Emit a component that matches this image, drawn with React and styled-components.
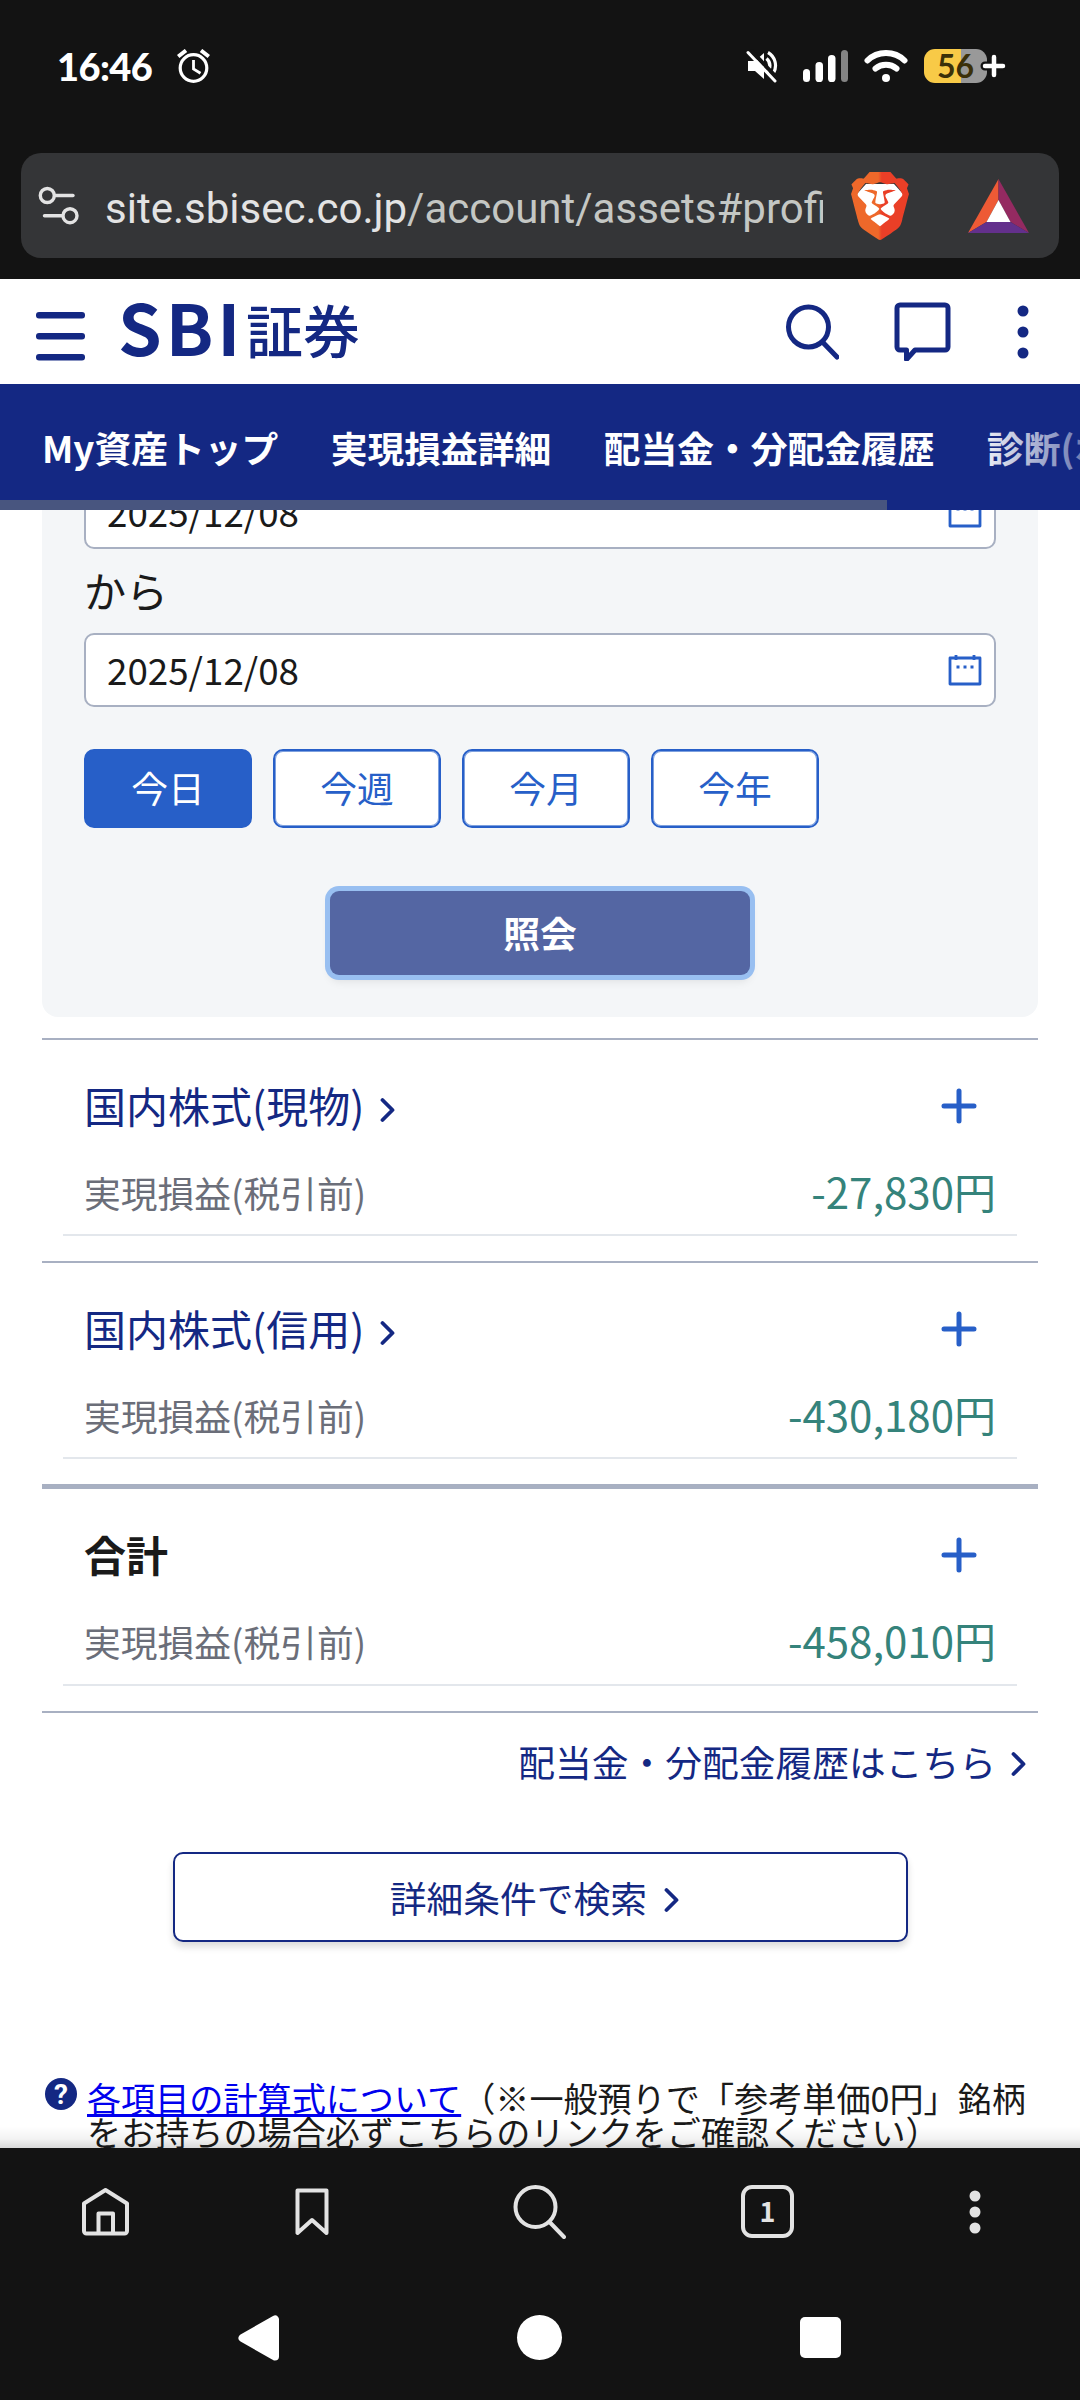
import React from "react";
import styled, { createGlobalStyle, css } from "styled-components";
import { SiBrave } from "react-icons/si";

const navy = "#142883";
const blue = "#275fc8";
const lineGray = "#a8b0c2";

const GlobalStyle = createGlobalStyle`
  * {
    box-sizing: border-box;
  }
  body {
    margin: 0;
    background: #fff;
    color: #1a1a1a;
    font-family: "Noto Sans CJK JP", "Noto Sans", sans-serif;
    font-size: 36.75px;
  }
  svg {
    display: block;
    flex: none;
  }
`;

const Screen = styled.div`
  display: flex;
  flex-direction: column;
  width: 1080px;
  height: 2400px;
  overflow: hidden;
`;

const BrowserTop = styled.div`
  height: 279px;
  flex: none;
  background: #131313;
`;

const StatusBar = styled.div`
  display: flex;
  align-items: center;
  justify-content: space-between;
  height: 153px;
  padding: 0 93px 21px 57px;
`;

const StatusGroup = styled.div`
  display: flex;
  align-items: center;
`;

const Clock = styled.span`
  width: 120px;
  color: #fff;
  font-family: Lato, "Open Sans", sans-serif;
  font-size: 38px;
  font-weight: 900;
  letter-spacing: -0.6px;
  line-height: 43px;
`;

const Battery = styled.div`
  position: relative;
  width: 63px;
  height: 34px;
  margin-left: 16px;
  border-radius: 11px;
  background: linear-gradient(to right, #f8ca47 37px, #999 37px);
  color: #3b3009;
  font-family: Lato, sans-serif;
  font-size: 32px;
  font-weight: 700;
  line-height: 33px;
  text-align: center;
`;

const ChargeMark = styled.svg`
  position: absolute;
  left: 55px;
  top: 2px;
`;

const AddressBar = styled.div`
  display: flex;
  align-items: center;
  height: 105px;
  margin: 0 21px;
  padding: 0 30px 0 17px;
  border-radius: 20px;
  background: #343537;
`;

const Url = styled.div`
  width: 718px;
  margin-left: 26px;
  overflow: hidden;
  color: #c4c7c4;
  font-family: Roboto, sans-serif;
  font-size: 42px;
  line-height: 60px;
  padding-top: 7px;
  white-space: nowrap;

  b {
    color: #e3e3e3;
    font-weight: 400;
  }
`;

const BraveBadge = styled.div`
  display: grid;
  width: 68px;
  height: 68px;
  margin-left: 23px;

  > svg {
    grid-area: 1 / 1;
  }
`;

const SiteHeader = styled.header`
  display: flex;
  align-items: center;
  height: 105px;
  flex: none;
  padding: 0 51px 0 36px;
`;

const Logo = styled.div`
  display: flex;
  align-items: center;
  flex: 1;
  margin-left: 33px;
  color: ${navy};
`;

const LogoLatin = styled.span`
  width: 128px;
  margin-top: -11px;
  font-size: 70px;
  font-weight: 700;
  letter-spacing: 4px;
  line-height: 84px;
`;

const LogoKanji = styled.span`
  margin-top: -8px;
  font-size: 57px;
  font-weight: 500;
  line-height: 84px;
`;

const Tabs = styled.nav`
  position: relative;
  display: flex;
  align-items: center;
  gap: 52.5px;
  height: 126px;
  flex: none;
  padding-left: 42px;
  overflow: hidden;
  background: ${navy};
  color: #fff;
  font-weight: 700;
  white-space: nowrap;

  &::before {
    content: "";
    position: absolute;
    left: 0;
    bottom: 0;
    width: 887px;
    height: 10px;
    background: #48557f;
  }

  &::after {
    content: "";
    position: absolute;
    top: 0;
    right: 0;
    width: 110px;
    height: 126px;
    background: linear-gradient(to right, rgba(20, 40, 131, 0), rgba(20, 40, 131, 0.6));
  }
`;

const Page = styled.main`
  position: relative;
  flex: 1;
  min-height: 0;
  padding: 0 42px;
  overflow: hidden;

  &::after {
    content: "";
    position: absolute;
    left: 0;
    right: 0;
    bottom: 0;
    height: 22px;
    background: linear-gradient(to bottom, rgba(0, 0, 0, 0), rgba(0, 0, 0, 0.05) 60%, rgba(0, 0, 0, 0.15));
  }
`;

const SearchPanel = styled.section`
  height: 563px;
  margin-top: -56px;
  padding: 21px 42px 0;
  border-radius: 16px;
  background: #f4f6f8;
`;

const DateField = styled.div`
  display: flex;
  align-items: center;
  justify-content: space-between;
  height: 74px;
  padding: 0 12px 2px 21px;
  border: 2px solid ${lineGray};
  border-radius: 10px;
  background: #fff;
  line-height: 68px;

  > svg {
    margin-top: 2px;
  }
`;

const FromLabel = styled.div`
  height: 84px;
  font-size: 42px;
  line-height: 82px;
`;

const RangeButtons = styled.div`
  display: flex;
  gap: 21px;
  margin-top: 42px;
`;

const RangeButton = styled.button`
  width: 168px;
  height: 79px;
  padding: 0 0 2px;
  border: 2px solid ${blue};
  border-radius: 10px;
  background: #fff;
  box-shadow: inset 0 0 0 1px #7da0de;
  color: ${blue};
  font: inherit;
  line-height: 73px;

  ${(props) =>
    props.$active &&
    css`
      background: ${blue};
      box-shadow: none;
      color: #fff;
    `}
`;

const SubmitButton = styled.button`
  display: block;
  width: 420px;
  height: 84px;
  margin: 63px auto 0;
  padding: 0 0 3px;
  border: 0;
  border-radius: 9px;
  background: #5466a3;
  box-shadow: 0 0 0 5px #98bff1, 0 6px 10px rgba(0, 0, 0, 0.1);
  color: #fff;
  font: inherit;
  font-weight: 700;
  line-height: 80px;
`;

const Summary = styled.section`
  margin-top: 21px;
  border-bottom: 2px solid ${lineGray};
`;

const SummaryItem = styled.div`
  padding: 35px 21px 25px;
  border-top: ${(props) => (props.$total ? 5 : 2)}px solid ${lineGray};
`;

const ItemTitle = styled.div`
  display: flex;
  align-items: center;
  height: 60px;
  padding: 0 40px 0 21px;
  color: ${(props) => (props.$total ? "#1a1a1a" : navy)};
  font-size: 42px;
  font-weight: ${(props) => (props.$total ? 700 : 400)};
  line-height: 60px;

  > svg:last-child {
    margin: 1px 0 0 auto;
  }
`;

const ItemValue = styled.div`
  display: flex;
  align-items: baseline;
  justify-content: space-between;
  height: ${(props) => (props.$total ? 77 : 76)}px;
  margin-top: 25px;
  padding: 0 21px;
  border-bottom: 2px solid #e3e7ec;
  color: #6b6e79;
  line-height: 60px;
`;

const Amount = styled.span`
  color: #35837b;
  font-size: 42px;
  transform: translateY(1px);
`;

const HistoryLink = styled.a`
  display: flex;
  align-items: center;
  justify-content: flex-end;
  gap: 15px;
  height: 96px;
  padding-right: 12px;
  color: ${navy};
`;

const DetailButton = styled.button`
  display: flex;
  align-items: center;
  justify-content: center;
  gap: 17px;
  width: 735px;
  height: 90px;
  margin: 43px auto 0;
  padding: 0 11px 0 0;
  border: 2px solid ${navy};
  border-radius: 10px;
  background: #fff;
  box-shadow: 0 5px 7px rgba(0, 0, 0, 0.14);
  color: ${navy};
  font: inherit;
  line-height: 86px;
`;

const Note = styled.div`
  display: flex;
  margin: 138px 0 0 2px;
  font-size: 34.125px;
  line-height: 34px;
  white-space: nowrap;

  a {
    color: #0000ee;
    text-decoration: underline 3px;
    text-decoration-skip-ink: none;
    text-underline-offset: 2px;
  }
`;

const HelpBadge = styled.span`
  width: 32px;
  height: 32px;
  margin: -2px 10px 0 1px;
  border-radius: 50%;
  background: ${navy};
  color: #fff;
  font-family: Roboto, sans-serif;
  font-size: 28px;
  font-weight: 700;
  line-height: 33px;
  text-align: center;
`;

const BrowserBottom = styled.footer`
  height: 252px;
  flex: none;
  background: #131313;
`;

const ToolRow = styled.div`
  display: grid;
  grid-template-columns: 215px 218px 229px 228px 12px;
  align-items: center;
  height: 127px;
  padding-left: 79px;
`;

const TabCount = styled.div`
  width: 53px;
  height: 53px;
  border: 4px solid #e3e3e3;
  border-radius: 11px;
  color: #e3e3e3;
  font-size: 27px;
  font-weight: 700;
  line-height: 44px;
  text-align: center;
`;

const SystemRow = styled.div`
  display: flex;
  align-items: center;
  justify-content: space-between;
  height: 125px;
  padding: 0 239px 0 237px;
`;

const SquareKey = styled.span`
  width: 41px;
  height: 41px;
  border-radius: 5px;
  background: #fff;
`;

const CircleKey = styled.span`
  width: 45px;
  height: 45px;
  margin-right: 3px;
  border-radius: 50%;
  background: #fff;
`;

function Chevron(props) {
  return (
    <svg width="15" height="26" viewBox="0 0 15 26" fill="none" stroke={navy} strokeWidth="3.8" strokeLinecap="round" strokeLinejoin="round" {...props}>
      <path d="M2.5 3 12.5 13 2.5 23" />
    </svg>
  );
}

function Plus() {
  return (
    <svg width="36" height="36" viewBox="0 0 36 36" stroke={blue} strokeWidth="5" strokeLinecap="round">
      <path d="M18 3v30M3 18h30" />
    </svg>
  );
}

function Calendar() {
  return (
    <svg width="34" height="34" viewBox="0 0 34 34" fill="none" stroke={blue} strokeWidth="2.8" strokeLinejoin="round">
      <path d="M2 5h30v26H2zM8 2v5M26 2v5" />
      <path d="M8.5 14h3M15.5 14h3M22.5 14h3" strokeWidth="3" />
    </svg>
  );
}

function Magnifier({ color, width }) {
  return (
    <svg width="54" height="56" viewBox="0 0 54 56" fill="none" stroke={color} strokeWidth={width} strokeLinecap="round">
      <circle cx="23.5" cy="23" r="20" />
      <path d="M37.5 38 52 53" />
    </svg>
  );
}

function Dots({ color, step }) {
  return (
    <svg width="12" height="54" viewBox="0 0 12 54" fill={color}>
      <circle cx="6" cy={27 - step} r="5.5" />
      <circle cx="6" cy="27" r="5.5" />
      <circle cx="6" cy={27 + step} r="5.5" />
    </svg>
  );
}

const items = [
  { title: "国内株式(現物)", value: "-27,830円" },
  { title: "国内株式(信用)", value: "-430,180円" },
  { title: "合計", value: "-458,010円", total: true },
];

const ranges = ["今日", "今週", "今月", "今年"];

function PhoneStatus() {
  return (
    <StatusBar>
      <StatusGroup>
        <Clock>16:46</Clock>
        <svg width="33" height="34" viewBox="0 0 33 34" fill="none" stroke="#fff" strokeWidth="3.2">
          <circle cx="16.5" cy="19" r="13.3" />
          <path d="M16.5 11v9l7 4.2" strokeWidth="2.8" />
          <path d="M1.2 7.5 9 1.5M31.8 7.5 24 1.5" strokeWidth="4" />
        </svg>
      </StatusGroup>
      <StatusGroup>
        <svg width="32" height="34" viewBox="0 0 32 34">
          <path d="M2 12h7l9-8v26l-9-8H2z" fill="#fff" />
          <path d="M20.5 9.5a9 9 0 0 1 0 14" fill="none" stroke="#fff" strokeWidth="3.4" />
          <path d="M22 3.5a15 15 0 0 1 5.5 20.5" fill="none" stroke="#fff" strokeWidth="3.2" />
          <path d="M4.5 1 32 30" stroke="#131313" strokeWidth="4" />
          <path d="M2 3.5 29 32" stroke="#fff" strokeWidth="3" strokeLinecap="round" />
        </svg>
        <svg width="46" height="34" viewBox="0 0 46 34" fill="#fff" style={{ marginLeft: 25 }}>
          <rect x="0" y="20" width="7" height="13" rx="3.5" />
          <rect x="12.5" y="13" width="7.5" height="20" rx="3.6" />
          <rect x="25" y="6" width="7.5" height="27" rx="3.6" />
          <rect x="38" y="1" width="7" height="32" rx="3.5" fill="#858585" />
        </svg>
        <svg width="44" height="34" viewBox="0 0 44 34" fill="none" stroke="#fff" strokeWidth="6" strokeLinecap="round" style={{ marginLeft: 15 }}>
          <path d="M3.5 11.5c10-10 27-10 37 0" />
          <path d="M11.5 19.5c6-5 15-5 21 0" />
          <circle cx="22" cy="29" r="4" fill="#fff" stroke="none" />
        </svg>
        <Battery>
          56
          <ChargeMark width="30" height="30" viewBox="0 0 30 30" strokeLinecap="round">
            <path d="M15 6v18M6 15h18" stroke="#131313" strokeWidth="9" />
            <path d="M15 6v18M6 15h18" stroke="#fff" strokeWidth="4.5" />
          </ChargeMark>
        </Battery>
      </StatusGroup>
    </StatusBar>
  );
}

function BraveAddressBar() {
  return (
    <AddressBar>
      <svg width="41" height="40" viewBox="0 0 41 40" fill="none" stroke="#e3e3e3" strokeWidth="3.4" strokeLinecap="round">
        <circle cx="9.3" cy="9.5" r="7" />
        <path d="M17 9.5h18" />
        <circle cx="32" cy="29.7" r="7" />
        <path d="M6.5 29.7H24" />
      </svg>
      <Url>
        <b>site.sbisec.co.jp</b>/account/assets#profitloss
      </Url>
      <BraveBadge>
        <svg width="68" height="68" viewBox="0 0 68 68" fill="#fff">
          <path d="M20 12h28l10 11-6 25-18 12-18-12-6-25z" />
        </svg>
        <svg width="0" height="0">
          <linearGradient id="brave" x1="0" x2="1">
            <stop offset="0.47" stopColor="#ee682a" />
            <stop offset="0.53" stopColor="#ea3f27" />
          </linearGradient>
        </svg>
        <SiBrave size={68} fill="url(#brave)" />
      </BraveBadge>
      <svg width="61" height="54" viewBox="0 0 61 54" style={{ marginLeft: "auto" }}>
        <path d="M30.5 0 0 54l18.5-11L30.5 21z" fill="#ee5a35" />
        <path d="M30.5 0 61 54 42.5 43 30.5 21z" fill="#942a61" />
        <path d="M0 54h61L42.5 43h-24z" fill="#63308c" />
        <path d="M30.5 21 42.5 43h-24z" fill="#fff" />
      </svg>
    </AddressBar>
  );
}

export default function App() {
  return (
    <Screen>
      <GlobalStyle />
      <BrowserTop>
        <PhoneStatus />
        <BraveAddressBar />
      </BrowserTop>

      <SiteHeader>
        <svg width="49" height="49" viewBox="0 0 49 49" fill={navy} style={{ marginTop: 10 }}>
          <rect y="0" width="49" height="6.5" rx="3" />
          <rect y="21" width="49" height="6.5" rx="3" />
          <rect y="42" width="49" height="6.5" rx="3" />
        </svg>
        <Logo>
          <LogoLatin>SBI</LogoLatin>
          <LogoKanji>証券</LogoKanji>
        </Logo>
        <Magnifier color={navy} width={5} />
        <svg width="57" height="59" viewBox="0 0 57 59" fill="none" stroke={navy} strokeWidth="5" strokeLinejoin="round" style={{ margin: "0 66px 0 55px" }}>
          <path d="M6 3h45a3 3 0 0 1 3 3v39a3 3 0 0 1-3 3H21l-8.5 9.5V48H6a3 3 0 0 1-3-3V6a3 3 0 0 1 3-3z" />
        </svg>
        <Dots color={navy} step={21} />
      </SiteHeader>

      <Tabs>
        <span>My資産トップ</span>
        <span>実現損益詳細</span>
        <span>配当金・分配金履歴</span>
        <span>診断(ポートフォリオ)</span>
      </Tabs>

      <Page>
        <SearchPanel>
          <DateField>
            2025/12/08
            <Calendar />
          </DateField>
          <FromLabel>から</FromLabel>
          <DateField>
            2025/12/08
            <Calendar />
          </DateField>
          <RangeButtons>
            {ranges.map((label, i) => (
              <RangeButton key={label} $active={i === 0}>
                {label}
              </RangeButton>
            ))}
          </RangeButtons>
          <SubmitButton>照会</SubmitButton>
        </SearchPanel>

        <Summary>
          {items.map((item) => (
            <SummaryItem key={item.title} $total={item.total}>
              <ItemTitle $total={item.total}>
                {item.title}
                {!item.total && <Chevron style={{ margin: "10px 0 0 16px" }} />}
                <Plus />
              </ItemTitle>
              <ItemValue $total={item.total}>
                実現損益(税引前)
                <Amount>{item.value}</Amount>
              </ItemValue>
            </SummaryItem>
          ))}
        </Summary>

        <HistoryLink>
          配当金・分配金履歴はこちら
          <Chevron style={{ marginTop: 6 }} />
        </HistoryLink>
        <DetailButton>
          詳細条件で検索
          <Chevron style={{ marginTop: 6 }} />
        </DetailButton>

        <Note>
          <HelpBadge>?</HelpBadge>
          <div>
            <a>各項目の計算式について</a>（※一般預りで「参考単価0円」銘柄
            <br />
            をお持ちの場合必ずこちらのリンクをご確認ください）
          </div>
        </Note>
      </Page>

      <BrowserBottom>
        <ToolRow>
          <svg width="54" height="54" viewBox="0 0 54 54" fill="none" stroke="#e3e3e3" strokeWidth="4" strokeLinejoin="round">
            <path d="M5 18.5 26.5 5 48 18.5V46a2.5 2.5 0 0 1-2.5 2.5h-38A2.5 2.5 0 0 1 5 46z" />
            <path d="M19.5 48V28.5H34V48" />
          </svg>
          <svg width="36" height="50" viewBox="0 0 36 50" fill="none" stroke="#e3e3e3" strokeWidth="4" strokeLinejoin="round">
            <path d="M3.5 3.5h29v42.5L18 33 3.5 46z" />
          </svg>
          <Magnifier color="#e3e3e3" width={4} />
          <TabCount>1</TabCount>
          <Dots color="#e3e3e3" step={16} />
        </ToolRow>
        <SystemRow>
          <svg width="44" height="46" viewBox="0 0 44 46" fill="#fff" stroke="#fff" strokeWidth="8" strokeLinejoin="round">
            <path d="M5.5 23 38 4.5v37z" />
          </svg>
          <CircleKey />
          <SquareKey />
        </SystemRow>
      </BrowserBottom>
    </Screen>
  );
}
